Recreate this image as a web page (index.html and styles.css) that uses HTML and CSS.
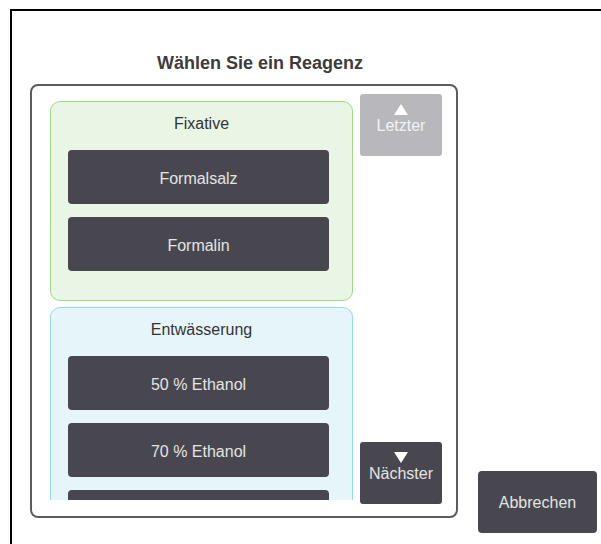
FILE: index.html
```html
<!DOCTYPE html>
<html lang="de">
<head>
  <meta charset="UTF-8" />
  <title>Reagenz wählen</title>
  <link rel="stylesheet" href="styles.css">
</head>
<body>

  <!-- Rahmen des Dialogs -->
  <div class="frame">
    <h2 class="title">Wählen Sie ein Reagenz</h2>

    <div class="content">
      <!-- Auswahlpanel -->
      <div class="panel">
        <div class="list">
          <div class="group group-fix">
            <div class="group-label">Fixative</div>
            <div class="items">
              <button class="item">Formalsalz</button>
              <button class="item">Formalin</button>
            </div>
          </div>

          <div class="group group-dehyd">
            <div class="group-label">Entwässerung</div>
            <div class="items">
              <button class="item">50 % Ethanol</button>
              <button class="item">70 % Ethanol</button>
              <!-- nächster Eintrag, nur angeschnitten sichtbar -->
              <button class="item" aria-label="80 % Ethanol"></button>
            </div>
          </div>
        </div>

        <div class="side">
          <button class="nav-btn nav-prev">
            <span class="arrow arrow-up"></span>
            <span>Letzter</span>
          </button>
          <button class="nav-btn nav-next">
            <span class="arrow arrow-down"></span>
            <span>Nächster</span>
          </button>
        </div>
      </div>

      <button class="cancel">Abbrechen</button>
    </div>
  </div>

</body>
</html>
```

FILE: styles.css
```css
body {
  margin: 0;
  font-family: "Liberation Sans", Arial, sans-serif;
  background: #ffffff;
  overflow: hidden;
}

button {
  font-family: inherit;
  border: none;
  cursor: pointer;
}

/* Rahmen */
.frame {
  box-sizing: border-box;
  margin: 9px 0 0 10px;
  height: calc(100vh - 9px);
  border-top: 2px solid #000;
  border-left: 2px solid #000;
}

.title {
  margin: 41px 0 0 0;
  padding-left: 145px;
  font-size: 18px;
  line-height: 22px;
  font-weight: 700;
  color: #3c3c3c;
}

.content {
  display: flex;
  align-items: flex-start;
  margin-top: 10px;
}

/* Panel */
.panel {
  display: flex;
  gap: 7px;
  box-sizing: border-box;
  width: 428px;
  height: 434px;
  margin-left: 18px;
  padding: 8px 14px 12px 18px;
  border: 2px solid #5c5c5c;
  border-radius: 8px;
}

.list {
  width: 303px;
  margin: 7px 0 4px;
  overflow: hidden;
}

.group {
  box-sizing: border-box;
  padding: 12px 23px 29px 17px;
  border-radius: 10px;
}

.group-fix {
  background: #e9f5e5;
  border: 1px solid #9fd889;
}

.group-dehyd {
  margin-top: 6px;
  background: #e6f5fa;
  border: 1px solid #94d9ec;
}

.group-label {
  font-size: 16px;
  line-height: 20px;
  color: #333333;
  text-align: center;
  margin-left: 6px;
  margin-bottom: 16px;
}

.items {
  display: flex;
  flex-direction: column;
  gap: 13px;
}

.item {
  width: 261px;
  height: 54px;
  padding-top: 4px;
  background: #48474f;
  color: #e4e4e4;
  font-size: 16px;
  border-radius: 4px;
}

/* Blättern */
.side {
  display: flex;
  flex-direction: column;
  justify-content: space-between;
  width: 82px;
}

.nav-btn {
  display: flex;
  flex-direction: column;
  align-items: center;
  gap: 2px;
  height: 62px;
  padding: 10px 0 0;
  font-size: 16px;
  line-height: 18px;
  border-radius: 3px;
}

.nav-prev {
  background: #b8b8bc;
  color: #f2f2f2;
}

.nav-next {
  background: #48474f;
  color: #e4e4e4;
}

.arrow {
  width: 0;
  height: 0;
  border-left: 7px solid transparent;
  border-right: 7px solid transparent;
}

.arrow-up {
  border-bottom: 11px solid #ffffff;
}

.arrow-down {
  border-top: 11px solid #ffffff;
}

/* Abbrechen */
.cancel {
  width: 119px;
  height: 62px;
  margin: 387px 0 0 20px;
  padding-top: 2px;
  background: #48474f;
  color: #e4e4e4;
  font-size: 16px;
  border-radius: 4px;
}
```
